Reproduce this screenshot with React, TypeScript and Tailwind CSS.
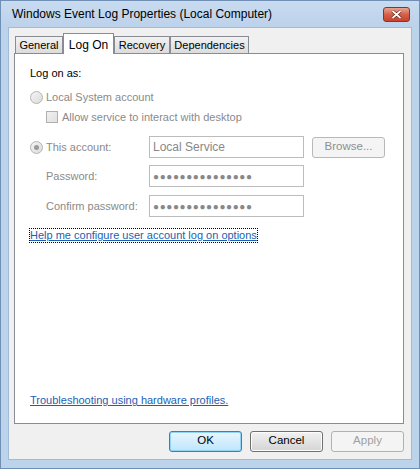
import React from 'react';

const font = { fontFamily: '"Liberation Sans", Arial, sans-serif' };

const Radio = ({ checked }: { checked?: boolean }) => (
  <span className="w-[13px] h-[13px] rounded-full border border-[#b4b4b4] bg-gradient-to-br from-[#f4f4f4] to-[#dcdcdc] flex items-center justify-center shrink-0">
    {checked && <span className="w-[5px] h-[5px] rounded-full bg-[#9a9a9a]" />}
  </span>
);

const Field = ({ value, dots }: { value?: string; dots?: boolean }) => (
  <div className="w-[155px] h-[22px] border border-[#bcbcbc] bg-white flex items-center px-[3px] text-[12px] text-[#888]">
    {dots ? (
      <span className="tracking-[0.6px] text-[#888] text-[10px]">{'●'.repeat(15)}</span>
    ) : (
      value
    )}
  </div>
);

const Tab = ({ label, active, w }: { label: string; active?: boolean; w: string }) =>
  active ? (
    <div className={`${w} h-[21px] -mb-px border border-b-0 border-[#898c95] bg-white flex items-start justify-center pt-[2px] text-[12px] text-black relative z-10`}>
      {label}
    </div>
  ) : (
    <div className={`${w} h-[17px] mt-[4px] border border-b-0 border-[#898c95] bg-gradient-to-b from-[#f2f2f2] to-[#dcdcdc] flex items-center justify-center text-[11px] text-black`}>
      {label}
    </div>
  );

const Btn = ({ label, variant }: { label: string; variant: 'default' | 'normal' | 'disabled' }) => {
  const cls =
    variant === 'default'
      ? 'border-[#3c7fb1] bg-gradient-to-b from-[#e9f6fd] to-[#bde6fd] text-black shadow-[inset_0_0_0_1px_#93d4f5]'
      : variant === 'normal'
        ? 'border-[#707070] bg-gradient-to-b from-[#f2f2f2] to-[#d4d4d4] text-black shadow-[inset_0_0_0_1px_#fcfcfc]'
        : 'border-[#adb2b5] bg-[#f4f4f4] text-[#a0a0a0]';
  return (
    <div className={`w-[73px] h-[21px] rounded-[3px] border flex items-center justify-center text-[11.5px] ${cls}`}>
      {label}
    </div>
  );
};

export default function App() {
  return (
    <div
      className="w-[420px] h-[469px] bg-[#bcd3ec] border border-[#6f8fb5] flex flex-col overflow-hidden"
      style={font}
    >
      {/* title bar */}
      <div className="h-[26px] flex items-center justify-between pl-[11px] pr-[9px] bg-gradient-to-b from-[#c8dbf0] to-[#bcd2ea] shrink-0">
        <span className="text-[12px] text-black">Windows Event Log Properties (Local Computer)</span>
        <div className="w-[27px] h-[15px] rounded-[3px] border border-[#7a3a30] bg-gradient-to-b from-[#e8a493] via-[#d4604a] to-[#c8422a] flex items-center justify-center">
          <svg width="11" height="9" viewBox="0 0 11 9">
            <path d="M1.5 1 L9.5 8 M9.5 1 L1.5 8" stroke="#5a1a10" strokeWidth="3" />
            <path d="M1.5 1 L9.5 8 M9.5 1 L1.5 8" stroke="#fff" strokeWidth="1.8" />
          </svg>
        </div>
      </div>

      {/* body */}
      <div className="flex-1 mx-[7px] mb-[8px] bg-[#f0f0f0] border border-[#a3bad6] flex flex-col pl-[5px] pr-[7px]">
        <div className="flex items-end pl-[1px] mt-[4px] h-[21px]">
          <Tab label="General" w="w-[48px]" />
          <Tab label="Log On" w="w-[51px]" active />
          <Tab label="Recovery" w="w-[56px]" />
          <Tab label="Dependencies" w="w-[79px]" />
        </div>

        <div className="h-[371px] bg-white border border-[#898c95] flex flex-col pl-[15px] text-[11px] text-[#8a8a8a]">
          <div className="mt-[11px] h-[16px] flex items-center text-black">Log on as:</div>

          <div className="mt-[8px] h-[16px] flex items-center gap-[3px]">
            <Radio />
            <span>Local System account</span>
          </div>

          <div className="mt-[4px] h-[16px] flex items-center gap-[4px] pl-[16px]">
            <span className="w-[12px] h-[12px] border border-[#b0b0b0] bg-gradient-to-br from-[#f0f0f0] to-[#e0e0e0]" />
            <span>Allow service to interact with desktop</span>
          </div>

          <div className="mt-[11px] h-[22px] flex items-center">
            <div className="w-[119px] flex items-center gap-[3px]">
              <Radio checked />
              <span>This account:</span>
            </div>
            <Field value="Local Service" />
            <div className="ml-[8px] w-[73px] h-[21px] rounded-[3px] border border-[#b5b9bc] bg-[#f4f4f4] flex items-center justify-center text-[#8f8f8f] text-[11.5px]">
              Browse...
            </div>
          </div>

          <div className="mt-[7px] h-[22px] flex items-center">
            <span className="w-[119px] pl-[16px]">Password:</span>
            <Field dots />
          </div>

          <div className="mt-[8px] h-[22px] flex items-center">
            <span className="w-[119px] pl-[16px]">Confirm password:</span>
            <Field dots />
          </div>

          <div className="mt-[11px] h-[15px] flex items-center">
            <span className="text-[#1b61b3] underline border border-dotted border-black leading-[13px] -ml-[1px]">
              Help me configure user account log on options
            </span>
          </div>

          <div className="mt-auto mb-[15px] h-[15px] flex items-center">
            <span className="text-[#1b61b3] underline">Troubleshooting using hardware profiles.</span>
          </div>
        </div>

        <div className="flex-1 flex items-center justify-end gap-[8px] pb-[1px]">
          <Btn label="OK" variant="default" />
          <Btn label="Cancel" variant="normal" />
          <Btn label="Apply" variant="disabled" />
        </div>
      </div>
    </div>
  );
}
